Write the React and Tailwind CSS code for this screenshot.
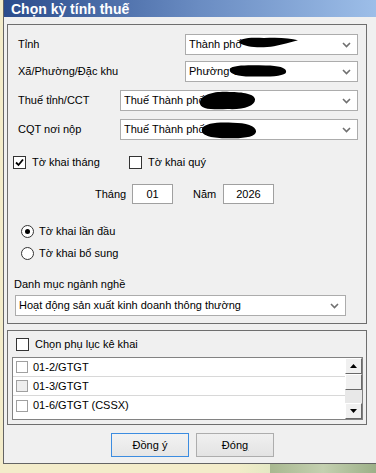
const font = { fontFamily: '"Liberation Sans", Arial, sans-serif' };

function Chevron() {
  return (
    <svg width="9" height="6" viewBox="0 0 9 6" className="shrink-0">
      <polyline points="1,1 4.5,4.5 8,1" fill="none" stroke="#707070" strokeWidth="1.6" />
    </svg>
  );
}

function Blob({ className, d }) {
  return (
    <svg className={`absolute ${className}`} viewBox="0 0 60 20" preserveAspectRatio="none">
      <path d={d} fill="#000" />
    </svg>
  );
}

function Combo({ width, text, blob }) {
  return (
    <div
      className="relative h-[21px] border border-[#acacac] bg-white flex items-center pl-[3px] pr-[6px]"
      style={{ width }}
    >
      <span className="flex-1 truncate text-[11px] text-black">{text}</span>
      <Chevron />
      {blob}
    </div>
  );
}

function CheckBox({ checked }) {
  return (
    <div className="w-[13px] h-[13px] border border-[#333] bg-white flex items-center justify-center shrink-0">
      {checked && (
        <svg width="9" height="9" viewBox="0 0 9 9">
          <polyline points="1,4.5 3.5,7 8,1.5" fill="none" stroke="#000" strokeWidth="1.8" />
        </svg>
      )}
    </div>
  );
}

function Radio({ checked }) {
  return (
    <div className="w-[13px] h-[13px] rounded-full border border-[#333] bg-white flex items-center justify-center shrink-0">
      {checked && <div className="w-[5px] h-[5px] rounded-full bg-black" />}
    </div>
  );
}

function ListRow({ label, gray, last }) {
  return (
    <div className={`h-[19px] flex items-center ${last ? '' : 'border-b border-[#d8d8d8]'}`}>
      <div className={`ml-[3px] w-[12px] h-[12px] border border-[#a0a0a0] ${gray ? 'bg-[#eeeeee]' : 'bg-white'}`} />
      <span className="ml-[5px] text-[11px] text-black">{label}</span>
    </div>
  );
}

function ScrollBtn({ up }) {
  return (
    <div className="h-[16px] w-full bg-[#f0f0f0] border-t border-l border-t-white border-l-white border-r border-b border-r-[#696969] border-b-[#696969] flex items-center justify-center">
      <svg width="7" height="4" viewBox="0 0 7 4">
        <polygon points={up ? '0,4 7,4 3.5,0' : '0,0 7,0 3.5,4'} fill="#000" />
      </svg>
    </div>
  );
}

export default function App() {
  return (
    <div className="w-[376px] h-[473px] overflow-hidden bg-[#f3ecca] flex flex-col text-black" style={font}>
      <div className="ml-[3px] w-[390px] h-[464px] shrink-0 border-l border-b border-[#646464] bg-[#f0f0f0] flex flex-col">
        <div className="h-[17px] shrink-0 bg-gradient-to-r from-[#2b4c8c] via-[#6a8cc2] to-[#a2c3ec] flex items-center pl-[7px]">
          <span className="text-[14px] font-bold text-white leading-none">Chọn kỳ tính thuế</span>
        </div>

        {/* main group */}
        <div className="mt-[7px] ml-[3px] w-[360px] h-[300px] shrink-0 border border-[#6e6e6e] flex flex-col text-[11px]">
          <div className="mt-[9px] flex items-center">
            <span className="pl-[10px] w-[177px]">Tỉnh</span>
            <Combo
              width={173}
              text="Thành phố"
              blob={<Blob className="left-[52px] top-[2px] w-[60px] h-[11px]" d="M1,10 C1,2 12,0 26,2 C40,0 52,2 60,6 C52,10 44,14 36,17 C24,20 8,20 1,10 Z" />}
            />
          </div>
          <div className="mt-[6px] flex items-center">
            <span className="pl-[10px] w-[177px]">Xã/Phường/Đặc khu</span>
            <Combo
              width={173}
              text="Phường T"
              blob={<Blob className="left-[43px] top-[3px] w-[58px] h-[12px]" d="M1,6 C4,0 22,0 38,1 C52,1 60,5 59,12 C58,19 40,20 22,19 C8,19 -1,14 1,6 Z" />}
            />
          </div>
          <div className="mt-[8px] flex items-center">
            <span className="pl-[10px] w-[112px]">Thuế tỉnh/CCT</span>
            <Combo
              width={238}
              text="Thuế Thành phố"
              blob={<Blob className="left-[78px] top-0 w-[57px] h-[19px]" d="M1,12 C2,3 18,0 32,1 C46,1 59,3 59,9 C59,16 46,20 30,19 C14,20 0,19 1,12 Z" />}
            />
          </div>
          <div className="mt-[8px] flex items-center">
            <span className="pl-[10px] w-[112px]">CQT nơi nộp</span>
            <Combo
              width={238}
              text="Thuế Thành phố"
              blob={<Blob className="left-[80px] top-[2px] w-[56px] h-[17px]" d="M1,8 C4,1 20,0 34,1 C48,1 59,5 59,11 C59,18 44,20 28,19 C12,19 -1,16 1,8 Z" />}
            />
          </div>

          <div className="mt-[16px] h-[13px] flex items-center pl-[5px]">
            <CheckBox checked />
            <span className="ml-[6px] w-[97px]">Tờ khai tháng</span>
            <CheckBox />
            <span className="ml-[6px]">Tờ khai quý</span>
          </div>

          <div className="mt-[15px] h-[20px] flex items-center pl-[87px]">
            <span className="w-[37px]">Tháng</span>
            <div className="w-[41px] h-[20px] border border-[#a0a0a0] bg-white flex items-center justify-center">01</div>
            <span className="ml-[20px] w-[30px]">Năm</span>
            <div className="w-[51px] h-[20px] border border-[#a0a0a0] bg-white flex items-center justify-center">2026</div>
          </div>

          <div className="mt-[21px] h-[13px] flex items-center pl-[13px]">
            <Radio checked />
            <span className="ml-[5px]">Tờ khai lần đầu</span>
          </div>
          <div className="mt-[9px] h-[13px] flex items-center pl-[13px]">
            <Radio />
            <span className="ml-[5px]">Tờ khai bổ sung</span>
          </div>

          <div className="mt-[18px] h-[13px] leading-[13px] pl-[6px]">Danh mục ngành nghề</div>
          <div className="mt-[4px] pl-[7px]">
            <Combo width={331} text="Hoạt động sản xuất kinh doanh thông thường" />
          </div>
        </div>

        {/* appendix group */}
        <div className="mt-[6px] ml-[3px] w-[360px] h-[95px] shrink-0 border border-[#6e6e6e] flex flex-col text-[11px]">
          <div className="mt-[7px] h-[13px] flex items-center pl-[8px]">
            <CheckBox />
            <span className="ml-[6px]">Chọn phụ lục kê khai</span>
          </div>
          <div className="mt-[6px] ml-[4px] w-[351px] h-[63px] border border-[#828282] bg-white flex">
            <div className="flex-1 flex flex-col">
              <ListRow label="01-2/GTGT" />
              <ListRow label="01-3/GTGT" gray />
              <ListRow label="01-6/GTGT (CSSX)" last />
            </div>
            <div className="w-[17px] flex flex-col">
              <ScrollBtn up />
              <div className="h-[16px] bg-[#f0f0f0] border-t border-l border-t-white border-l-white border-r border-b border-r-[#696969] border-b-[#696969]" />
              <div className="flex-1 bg-[#e8e8e8]" />
              <ScrollBtn />
            </div>
          </div>
        </div>

        <div className="mt-[8px] flex pl-[107px] gap-[7px] text-[11px]">
          <div className="w-[78px] h-[24px] border border-[#3c8ce0] bg-gradient-to-b from-[#f2f2f2] to-[#e6e6e6] flex items-center justify-center">
            <span>Đồn<span className="underline">g</span> ý</span>
          </div>
          <div className="w-[78px] h-[24px] border border-[#adadad] bg-gradient-to-b from-[#f0f0f0] to-[#e3e3e3] flex items-center justify-center">
            <span>Đón<span className="underline">g</span></span>
          </div>
        </div>
      </div>

      <div className="flex-1 flex">
        <div className="w-[240px] bg-[#f3ecca]" />
        <div className="w-[30px] bg-gradient-to-r from-[#f0ecc8] to-[#e4e8c4]" />
        <div className="flex-1 bg-gradient-to-r from-[#a8b890] via-[#c4d0b0] to-[#9cb088]" />
      </div>
    </div>
  );
}
